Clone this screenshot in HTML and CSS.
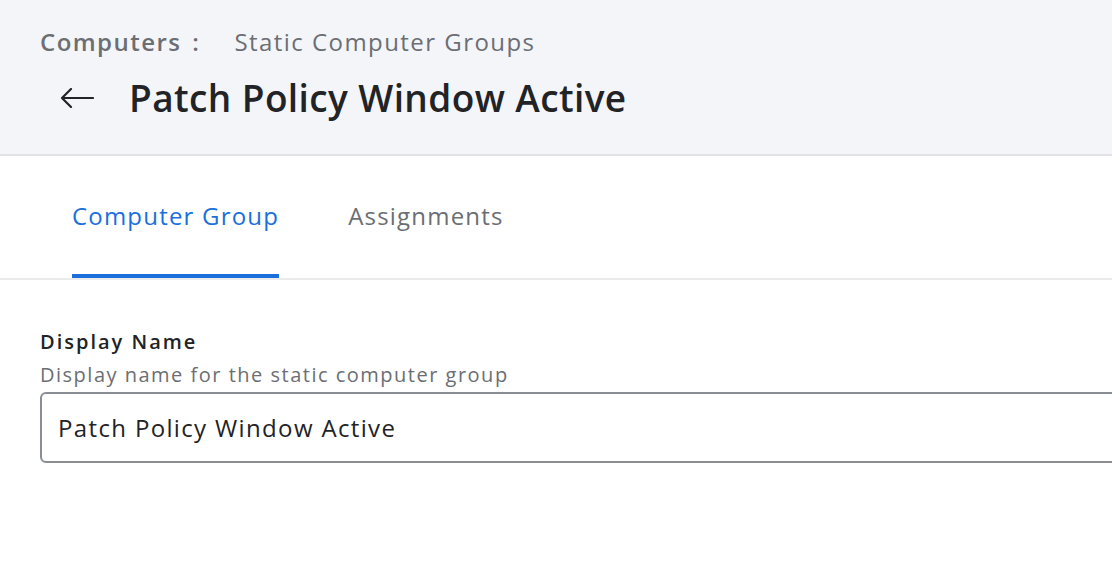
FILE: index.html
```html
<!DOCTYPE html>
<html lang="en">
<head>
    <meta charset="UTF-8">
    <title>Patch Policy Window Active</title>
    <link rel="stylesheet" href="styles.css">
</head>
<body>
    <div class="page-header">
        <div class="breadcrumb">
            <span class="crumb-root">Computers</span>
            <span class="crumb-sep">:</span>
            <span class="crumb-current">Static Computer Groups</span>
        </div>
        <div class="title-row">
            <button class="back-btn" aria-label="Back">
                <svg width="34" height="20" viewBox="0 0 34 20">
                    <path d="M33 10H2M11 1L2 10l9 9" fill="none" stroke="#222326" stroke-width="2.2" stroke-linecap="round" stroke-linejoin="round"/>
                </svg>
            </button>
            <h1 class="title">Patch Policy Window Active</h1>
        </div>
    </div>

    <div class="tabs">
        <div class="tab active">Computer Group</div>
        <div class="tab">Assignments</div>
    </div>

    <div class="form">
        <label class="field-label" for="display-name">Display Name</label>
        <div class="field-help">Display name for the static computer group</div>
        <input type="text" id="display-name" class="field-input" value="Patch Policy Window Active">
    </div>
</body>
</html>
```

FILE: styles.css
```css
* {
    box-sizing: border-box;
    margin: 0;
    padding: 0;
}

body {
    font-family: "Open Sans", Lato, sans-serif;
    background-color: #ffffff;
    color: #222326;
    overflow: hidden;
}

.page-header {
    background-color: #f4f5f9;
    border-bottom: 2px solid #e1e3e7;
    height: 156px;
    padding: 24px 40px 0 40px;
}

.breadcrumb {
    display: flex;
    align-items: center;
    font-size: 24px;
    line-height: 36px;
    letter-spacing: 1.45px;
    color: #6b6e73;
}

.crumb-root {
    font-weight: 600;
}

.crumb-sep {
    font-weight: 600;
    margin: 0 34px 0 11px;
}

.title-row {
    display: flex;
    align-items: center;
    margin-top: 12px;
}

.back-btn {
    background: none;
    border: none;
    width: 56px;
    height: 40px;
    margin-left: 20px;
    margin-right: 13px;
    display: flex;
    align-items: center;
}

.title {
    font-size: 37px;
    font-weight: 600;
    letter-spacing: 0.4px;
    line-height: 52px;
    color: #222326;
}

.tabs {
    display: flex;
    gap: 69px;
    padding-left: 72px;
    border-bottom: 2px solid #ebebec;
    height: 124px;
}

.tab {
    font-size: 24px;
    letter-spacing: 1.2px;
    color: #6b6e73;
    padding-top: 43px;
    height: 122px;
}

.tab.active {
    color: #1a6fdc;
    border-bottom: 4px solid #1a6fdc;
}

.form {
    padding: 48px 40px 0 40px;
}

.field-label {
    display: block;
    font-size: 20px;
    font-weight: 600;
    letter-spacing: 2px;
    line-height: 28px;
    color: #222326;
}

.field-help {
    font-size: 20px;
    letter-spacing: 1.5px;
    line-height: 28px;
    margin-top: 5px;
    color: #6b6e73;
}

.field-input {
    display: block;
    width: 1120px;
    height: 71px;
    margin-top: 3px;
    padding: 0 16px;
    font-family: "Open Sans", Lato, sans-serif;
    font-size: 24px;
    letter-spacing: 1.35px;
    color: #222326;
    border: 2px solid #8a8e94;
    border-radius: 6px;
    outline: none;
}
```
